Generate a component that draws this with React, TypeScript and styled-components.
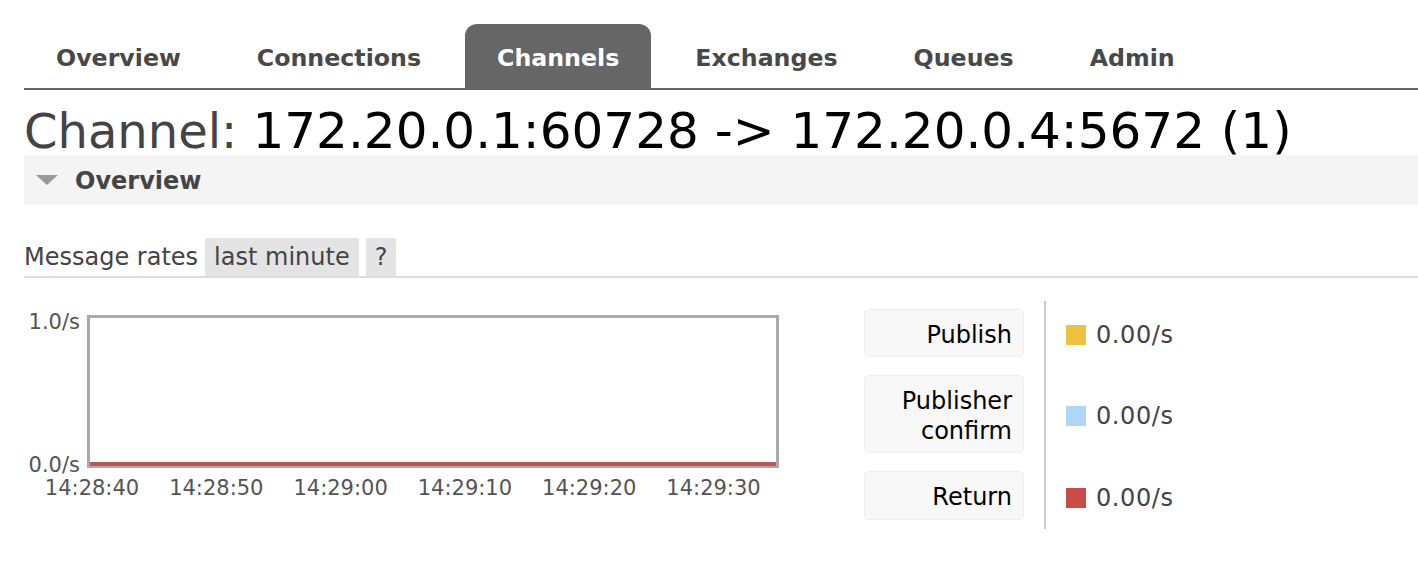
import React from 'react';
import styled, { createGlobalStyle, css } from 'styled-components';

const GlobalStyle = createGlobalStyle`
    html, body {
        margin: 0;
        padding: 0;
        background: #fff;
        overflow: hidden;
    }
    body {
        font-family: 'DejaVu Sans', Verdana, sans-serif;
        color: #444;
    }
`;

const Page = styled.div`
    padding: 24px 0 0 24px;
`;

const Tabs = styled.ul`
    display: flex;
    margin: 0;
    padding: 0;
    list-style: none;
    border-bottom: 2px solid #666;
`;

const Tab = styled.li<{ $active?: boolean }>(
    ({ $active = false }) => css`
        display: flex;
        align-items: center;
        box-sizing: border-box;
        height: 64px;
        padding: 3px 32px 0;
        margin-right: 12px;
        border-radius: 12px 12px 0 0;
        font-size: 23.7px;
        font-weight: bold;
        color: ${$active ? '#fff' : '#484848'};
        background: ${$active ? '#666' : 'transparent'};
    `
);

const Title = styled.h1`
    margin: 0;
    padding-top: 17px;
    height: 48px;
    line-height: 48px;
    font-size: 48px;
    font-weight: normal;
    color: #444;
    white-space: nowrap;
`;

const TitleValue = styled.b`
    font-weight: normal;
    font-size: 50px;
    color: #000;
`;

const SectionHeader = styled.div`
    display: flex;
    align-items: center;
    gap: 17px;
    box-sizing: border-box;
    height: 50px;
    padding: 2px 0 0 12px;
    background: #f4f4f4;
    font-size: 24px;
    font-weight: bold;
    color: #444;
`;

const Caret = styled.span`
    width: 0;
    height: 0;
    margin-top: -2px;
    border-left: 11px solid transparent;
    border-right: 11px solid transparent;
    border-top: 10px solid #999;
`;

const RatesBar = styled.div`
    display: flex;
    align-items: stretch;
    gap: 7px;
    height: 38px;
    margin-top: 33px;
    border-bottom: 2px solid #ddd;
    font-size: 24px;
    color: #444;
`;

const RatesLabel = styled.span`
    display: flex;
    align-items: center;
`;

const RatesButton = styled.span`
    display: flex;
    align-items: center;
    padding: 0 9px;
    background: #e4e4e4;
`;

const ChartRow = styled.div`
    display: flex;
    align-items: flex-start;
    margin-top: 23px;
`;

const Plot = styled.svg`
    display: block;
    flex: none;
    font-family: 'DejaVu Sans', Verdana, sans-serif;
`;

const Legend = styled.div`
    display: grid;
    grid-template-columns: 160px 42px auto;
    grid-auto-rows: auto;
    row-gap: 18px;
    margin-left: 60px;
    padding: 8px 0 9px;
`;

const SeriesButton = styled.div<{ $height: number }>(
    ({ $height }) => css`
        grid-column: 1;
        display: flex;
        align-items: center;
        justify-content: flex-end;
        box-sizing: border-box;
        height: ${$height}px;
        padding: 3px 11px 0;
        background: #f8f8f8;
        border: 1px solid #eee;
        border-radius: 5px;
        font-size: 24px;
        line-height: 30px;
        text-align: right;
        color: #000;
    `
);

const Divider = styled.div`
    grid-column: 2;
    grid-row: 1 / 4;
    justify-self: center;
    width: 2px;
    margin: -8px 0 -9px;
    background: #ccc;
`;

const SeriesValue = styled.div`
    grid-column: 3;
    display: flex;
    align-items: center;
    gap: 10px;
    padding-top: 4px;
    font-size: 24px;
    letter-spacing: 0.6px;
    color: #444;
`;

const Swatch = styled.span<{ $color: string }>(
    ({ $color }) => css`
        width: 20px;
        height: 20px;
        background: ${$color};
    `
);

const tabs = ['Overview', 'Connections', 'Channels', 'Exchanges', 'Queues', 'Admin'];

const series = [
    { label: 'Publish', color: '#edc240', height: 48 },
    { label: 'Publisher confirm', color: '#afd8f8', height: 78 },
    { label: 'Return', color: '#cb4b4b', height: 49 },
];

const ticks = ['14:28:40', '14:28:50', '14:29:00', '14:29:10', '14:29:20', '14:29:30'];

function RateChart() {
    return (
        <Plot width={780} height={210} viewBox="0 0 780 210">
            <rect x={64.5} y={15.5} width={689} height={150} fill="#fff" stroke="#aaa" strokeWidth={3} />
            <line x1={66} y1={163} x2={752} y2={163} stroke="#bf5456" strokeWidth={4} />
            <text x={56} y={28} textAnchor="end" fontSize={21} fill="#545454">1.0/s</text>
            <text x={56} y={171} textAnchor="end" fontSize={21} fill="#545454">0.0/s</text>
            {ticks.map((t, i) => (
                <text key={t} x={68 + i * 124.3} y={194} textAnchor="middle" fontSize={21} fill="#545454">
                    {t}
                </text>
            ))}
        </Plot>
    );
}

export default function App() {
    return (
        <Page>
            <GlobalStyle />
            <Tabs>
                {tabs.map((t) => (
                    <Tab key={t} $active={t === 'Channels'}>
                        {t}
                    </Tab>
                ))}
            </Tabs>
            <Title>
                Channel: <TitleValue>172.20.0.1:60728 -&gt; 172.20.0.4:5672 (1)</TitleValue>
            </Title>
            <SectionHeader>
                <Caret />
                Overview
            </SectionHeader>
            <RatesBar>
                <RatesLabel>Message rates</RatesLabel>
                <RatesButton>last minute</RatesButton>
                <RatesButton>?</RatesButton>
            </RatesBar>
            <ChartRow>
                <RateChart />
                <Legend>
                    {series.map((s, i) => (
                        <React.Fragment key={s.label}>
                            <SeriesButton $height={s.height} style={{ gridRow: i + 1 }}>
                                {s.label}
                            </SeriesButton>
                            <SeriesValue style={{ gridRow: i + 1 }}>
                                <Swatch $color={s.color} />
                                0.00/s
                            </SeriesValue>
                        </React.Fragment>
                    ))}
                    <Divider />
                </Legend>
            </ChartRow>
        </Page>
    );
}
